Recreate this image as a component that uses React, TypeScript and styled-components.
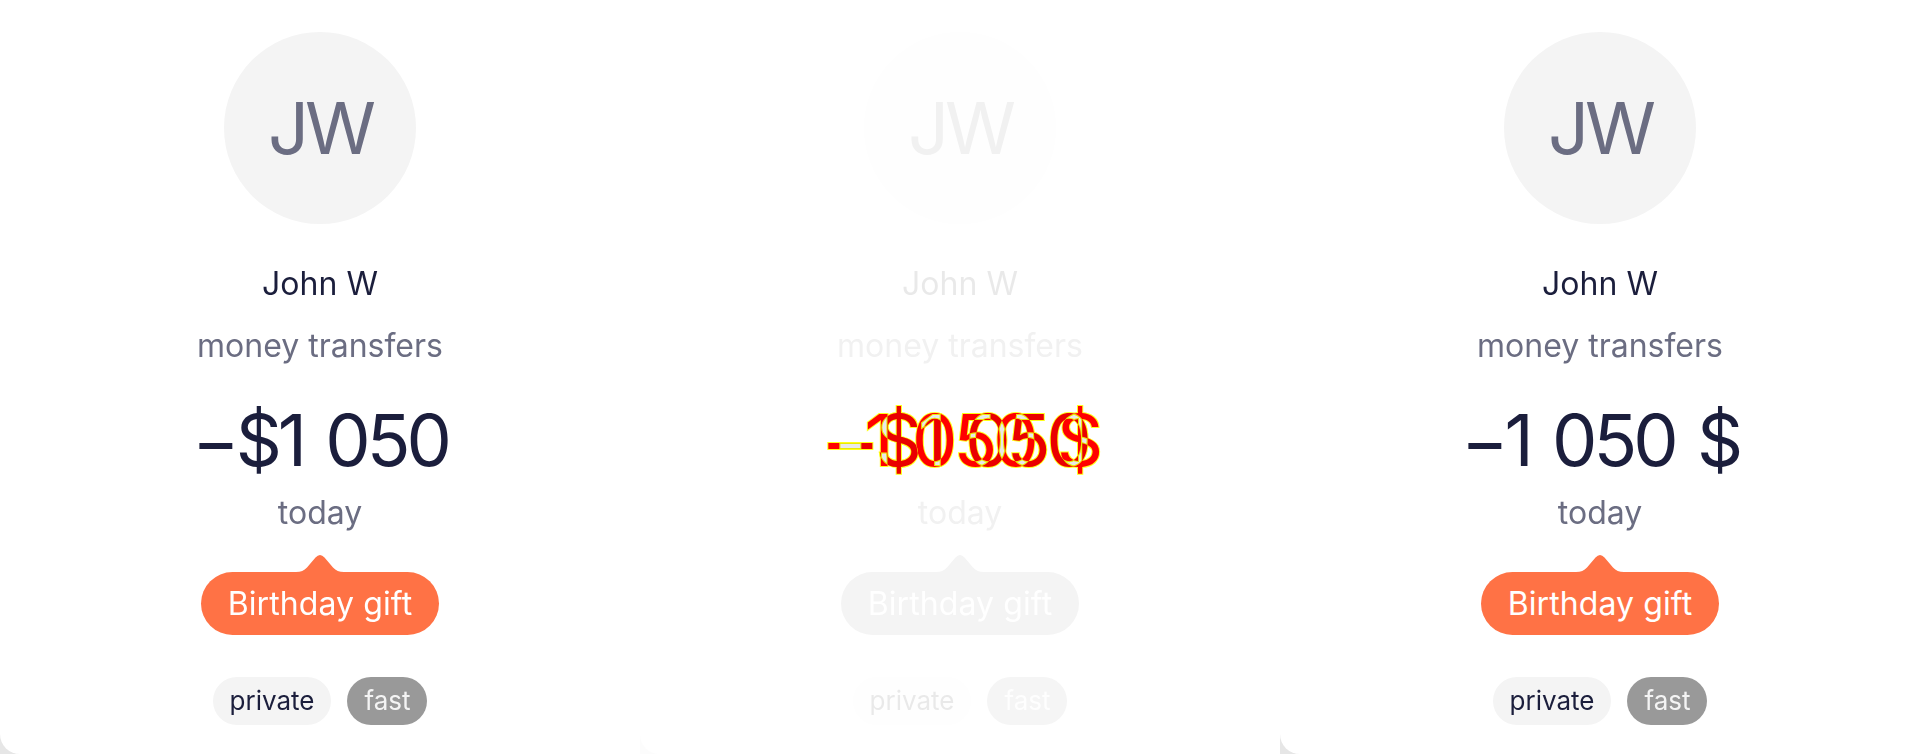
import React from "react";
import styled, { createGlobalStyle, css } from "styled-components";

const GlobalStyle = createGlobalStyle`
  html, body { margin: 0; padding: 0; background: #ffffff; }
  body { font-family: Inter, "Noto Sans", sans-serif; -webkit-font-smoothing: antialiased; }
  * { box-sizing: border-box; }
`;

const NAVY = "#1b1e3c";
const SLATE = "#6b6d82";

const Board = styled.main`
  display: grid;
  grid-template-columns: repeat(3, 640px);
  width: 1920px;
  height: 754px;
  overflow: hidden;
`;

const Panel = styled.section`
  display: grid;
  height: 754px;
  background: #ffffff;
`;

const Layer = styled.div<{ $faded?: boolean; $ghost?: boolean }>`
  grid-area: 1 / 1;
  display: flex;
  background: ${(p) => (p.$ghost ? "transparent" : "#e6e6e6")};
  ${(p) =>
    p.$faded &&
    css`
      filter: grayscale(1) opacity(0.1);
    `}
`;

const Card = styled.article<{ $ghost?: boolean }>`
  flex: 1;
  display: flex;
  flex-direction: column;
  align-items: center;
  padding-top: 32px;
  background: ${(p) => (p.$ghost ? "transparent" : "#ffffff")};
  border-bottom-left-radius: 20px;
`;

const Avatar = styled.div<{ $ghost?: boolean }>`
  width: 192px;
  height: 192px;
  border-radius: 50%;
  background: #f4f4f4;
  display: flex;
  align-items: center;
  justify-content: center;
  color: ${SLATE};
  font-size: 72px;
  letter-spacing: -4px;
  line-height: 1;
  visibility: ${(p) => (p.$ghost ? "hidden" : "visible")};
`;

const Name = styled.div<{ $ghost?: boolean }>`
  margin-top: 40px;
  font-size: 32px;
  line-height: 40px;
  color: ${NAVY};
  visibility: ${(p) => (p.$ghost ? "hidden" : "visible")};
`;

const Subtitle = styled.div<{ $ghost?: boolean }>`
  margin-top: 22px;
  font-size: 32px;
  line-height: 40px;
  color: ${SLATE};
  visibility: ${(p) => (p.$ghost ? "hidden" : "visible")};
`;

const AmountSlot = styled.div`
  margin-top: 34px;
  height: 80px;
  display: grid;
  justify-items: center;
`;

const amountFont = css`
  font-size: 72px;
  line-height: 80px;
  letter-spacing: -4px;
  word-spacing: 6px;
  white-space: pre;
`;

const Amount = styled.div`
  ${amountFont};
  color: ${NAVY};
`;

const When = styled(Subtitle)`
  margin-top: 13px;
`;

const NoteWrap = styled.div<{ $ghost?: boolean }>`
  margin-top: 39px;
  position: relative;
  visibility: ${(p) => (p.$ghost ? "hidden" : "visible")};
`;

const Note = styled.div`
  height: 63px;
  padding: 0 27px;
  border-radius: 32px;
  background: #ff7245;
  color: #ffffff;
  font-size: 32px;
  letter-spacing: 0.1px;
  line-height: 63px;
  white-space: nowrap;
`;

const Tail = styled.svg`
  position: absolute;
  left: 50%;
  bottom: 62px;
  width: 48px;
  height: 20px;
  transform: translateX(-50%);
  fill: #ff7245;
`;

const Tags = styled.div<{ $ghost?: boolean }>`
  margin-top: 42px;
  display: flex;
  gap: 16px;
  visibility: ${(p) => (p.$ghost ? "hidden" : "visible")};
`;

const Tag = styled.span<{ $tone: "light" | "dark" }>`
  height: 48px;
  padding: 0 17px;
  border-radius: 24px;
  font-size: 26px;
  line-height: 48px;
  background: ${(p) => (p.$tone === "light" ? "#f4f4f4" : "#999999")};
  color: ${(p) => (p.$tone === "light" ? NAVY : "#f4f4f4")};
`;

/* diff overlay: red where the two renders differ, yellow on anti-aliased edges */
const DiffStack = styled.div`
  display: grid;
  justify-items: center;
`;

const EdgeLayer = styled.div`
  grid-area: 1 / 1;
  display: grid;
  justify-items: center;
`;

const EdgeText = styled.span`
  grid-area: 1 / 1;
  ${amountFont};
  color: transparent;
  -webkit-text-stroke: 2px #ffff00;
`;

const XorLayer = styled.div`
  grid-area: 1 / 1;
  display: grid;
  justify-items: center;
  background: #ffffff;
  mix-blend-mode: multiply;
  isolation: isolate;
`;

const XorText = styled.span`
  grid-area: 1 / 1;
  ${amountFont};
  color: #00ffff;
  mix-blend-mode: difference;
`;

const USD_PREFIX = "\u2212$1 050";
const USD_SUFFIX = "\u22121 050 $";

type CardProps = { amount: string; ghost?: boolean; diff?: React.ReactNode };

const TransferCard: React.FC<CardProps> = ({ amount, ghost, diff }) => (
  <Card $ghost={ghost}>
    <Avatar $ghost={ghost}>JW</Avatar>
    <Name $ghost={ghost}>John W</Name>
    <Subtitle $ghost={ghost}>money transfers</Subtitle>
    <AmountSlot>{diff ?? <Amount>{amount}</Amount>}</AmountSlot>
    <When $ghost={ghost}>today</When>
    <NoteWrap $ghost={ghost}>
      <Tail viewBox="0 0 48 20" aria-hidden>
        <path d="M0 20 L0 19 C5 19 8 17.5 11 14.5 L19.5 4.5 Q24 -0.5 28.5 4.5 L37 14.5 C40 17.5 43 19 48 19 L48 20 Z" />
      </Tail>
      <Note>Birthday gift</Note>
    </NoteWrap>
    <Tags $ghost={ghost}>
      <Tag $tone="light">private</Tag>
      <Tag $tone="dark">fast</Tag>
    </Tags>
  </Card>
);

const DiffAmount: React.FC<{ a: string; b: string }> = ({ a, b }) => (
  <DiffStack>
    <EdgeLayer>
      <EdgeText>{a}</EdgeText>
      <EdgeText>{b}</EdgeText>
    </EdgeLayer>
    <XorLayer>
      <XorText>{a}</XorText>
      <XorText>{b}</XorText>
    </XorLayer>
  </DiffStack>
);

export default function App() {
  return (
    <>
      <GlobalStyle />
      <Board>
        <Panel>
          <Layer>
            <TransferCard amount={USD_PREFIX} />
          </Layer>
        </Panel>
        <Panel>
          <Layer $faded>
            <TransferCard amount={USD_PREFIX} />
          </Layer>
          <Layer $ghost>
            <TransferCard
              amount={USD_PREFIX}
              ghost
              diff={<DiffAmount a={USD_PREFIX} b={USD_SUFFIX} />}
            />
          </Layer>
        </Panel>
        <Panel>
          <Layer>
            <TransferCard amount={USD_SUFFIX} />
          </Layer>
        </Panel>
      </Board>
    </>
  );
}
